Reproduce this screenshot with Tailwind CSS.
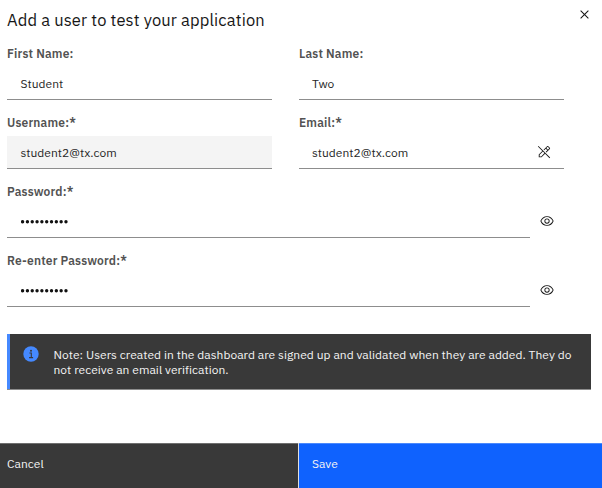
<!DOCTYPE html>
<html lang="en">
<head>
<meta charset="utf-8">
<title>Add a user</title>
<script src="https://cdn.jsdelivr.net/npm/@tailwindcss/browser@4"></script>
</head>
<body class="w-[602px] h-[488px] overflow-hidden bg-white text-[#262626] text-[12px] font-['IBM_Plex_Sans','Roboto',sans-serif]">
<main class="flex flex-col w-[602px] h-[488px]">
  <header class="flex h-[40px] pl-[7px] pr-[9.5px] justify-between items-start">
    <h1 class="text-[16.5px] leading-[20px] pt-[10px] tracking-[0.14px] text-[#161616] whitespace-nowrap">Add a user to test your application</h1>
    <button aria-label="Close" class="mt-[6px]"><svg class="block size-[17px]" viewBox="0 0 32 32" fill="#161616"><path d="M24 9.4 22.6 8 16 14.6 9.4 8 8 9.4 14.6 16 8 22.6 9.4 24 16 17.4 22.6 24 24 22.6 17.4 16z"/></svg></button>
  </header>

  <form class="flex flex-col pl-[7px]">
    <div class="grid grid-cols-[265px_265px] gap-x-[27px]">
      <div class="h-[69px] pt-[5px]">
        <label class="block h-[22px] leading-[18px] font-semibold tracking-[0.17px] text-[#525252]">First Name:</label>
        <div class="flex items-center h-[33px] pl-[13.5px] pt-px border-b border-[#8d8d8d] tracking-[0.02px]">Student</div>
      </div>
      <div class="h-[69px] pt-[5px]">
        <label class="block h-[22px] leading-[18px] font-semibold tracking-[0.17px] text-[#525252]">Last Name:</label>
        <div class="flex items-center h-[33px] pl-[13px] pt-px border-b border-[#8d8d8d] tracking-[0.02px]">Two</div>
      </div>
      <div class="h-[69px] pt-[5px]">
        <label class="block h-[22px] leading-[18px] font-semibold tracking-[0.17px] text-[#525252]">Username:*</label>
        <div class="flex items-center h-[33px] pl-[13.5px] pt-px border-b border-[#8d8d8d] bg-[#f4f4f4] tracking-[0.02px]">student2@tx.com</div>
      </div>
      <div class="h-[69px] pt-[5px]">
        <label class="block h-[22px] leading-[18px] font-semibold tracking-[0.17px] text-[#525252]">Email:*</label>
        <div class="flex items-center justify-between h-[33px] pl-[13px] pt-px pr-[13px] border-b border-[#8d8d8d] tracking-[0.02px]">
          <span>student2@tx.com</span>
          <svg class="size-[14px] mb-px" viewBox="0 0 32 32" fill="#161616"><path d="M30 28.6 3.4 2 2 3.4l10.1 10.1L4 21.6V28h6.4l8.1-8.1L28.6 30zM9.6 26H6v-3.6l7.5-7.5 3.6 3.6zM29.4 6.2l-3.6-3.6c-.8-.8-2-.8-2.8 0l-8 8 1.4 1.4L20 8.4l3.6 3.6-3.6 3.6 1.4 1.4 8-8c.8-.8.8-2 0-2.8zM25 10.6 21.4 7l3-3L28 7.6z"/></svg>
        </div>
      </div>
    </div>
    <div class="h-[69px] pt-[5px]">
      <label class="block h-[22px] leading-[18px] font-semibold tracking-[0.17px] text-[#525252]">Password:*</label>
      <div class="flex items-center gap-[10px]">
        <div class="flex items-center h-[33px] w-[523px] pl-[14px] border-b border-[#8d8d8d]">
          <svg class="w-[48px] h-[5px]" viewBox="0 0 48 5"><path d="M1.6 2.7h44" stroke="#111" stroke-width="3.4" stroke-linecap="round" stroke-dasharray="0 4.82"/></svg>
        </div>
        <svg class="size-[14px] mb-px" viewBox="0 0 32 32" fill="#161616"><path d="M30.94 15.66A16.69 16.69 0 0 0 16 5 16.69 16.69 0 0 0 1.06 15.66a1 1 0 0 0 0 .68A16.69 16.69 0 0 0 16 27a16.69 16.69 0 0 0 14.94-10.66 1 1 0 0 0 0-.68zM16 25c-5.3 0-10.9-3.93-12.93-9C5.1 10.93 10.7 7 16 7s10.9 3.93 12.93 9C26.9 21.07 21.3 25 16 25z"/><path d="M16 10a6 6 0 1 0 6 6 6 6 0 0 0-6-6zm0 10a4 4 0 1 1 4-4 4 4 0 0 1-4 4z"/></svg>
      </div>
    </div>
    <div class="h-[69px] pt-[5px]">
      <label class="block h-[22px] leading-[18px] font-semibold tracking-[0.17px] text-[#525252]">Re-enter Password:*</label>
      <div class="flex items-center gap-[10px]">
        <div class="flex items-center h-[33px] w-[523px] pl-[14px] border-b border-[#8d8d8d]">
          <svg class="w-[48px] h-[5px]" viewBox="0 0 48 5"><path d="M1.6 2.7h44" stroke="#111" stroke-width="3.4" stroke-linecap="round" stroke-dasharray="0 4.82"/></svg>
        </div>
        <svg class="size-[14px] mb-px" viewBox="0 0 32 32" fill="#161616"><path d="M30.94 15.66A16.69 16.69 0 0 0 16 5 16.69 16.69 0 0 0 1.06 15.66a1 1 0 0 0 0 .68A16.69 16.69 0 0 0 16 27a16.69 16.69 0 0 0 14.94-10.66 1 1 0 0 0 0-.68zM16 25c-5.3 0-10.9-3.93-12.93-9C5.1 10.93 10.7 7 16 7s10.9 3.93 12.93 9C26.9 21.07 21.3 25 16 25z"/><path d="M16 10a6 6 0 1 0 6 6 6 6 0 0 0-6-6zm0 10a4 4 0 1 1 4-4 4 4 0 0 1-4 4z"/></svg>
      </div>
    </div>
  </form>

  <section class="flex ml-[7px] mt-[18px] w-[584px] h-[56px] bg-[#393939] border-b border-b-[#8d8d8d] text-[#f4f4f4]">
    <div class="w-[2.5px] bg-[#4589ff] mr-[13.5px]"></div>
    <svg class="mt-[12px] size-[16px] shrink-0" viewBox="0 0 16 16"><circle cx="8" cy="8" r="7.7" fill="#4589ff"/><circle cx="8" cy="4.7" r="1" fill="#393939"/><path d="M6.4 7h1.9v4.6M6.1 11.6h4" fill="none" stroke="#393939" stroke-width="1.1"/></svg>
    <p class="ml-[14.5px] mt-[13px] leading-[15px] tracking-[0.03px] whitespace-nowrap">Note: Users created in the dashboard are signed up and validated when they are added. They do<br>not receive an email verification.</p>
  </section>

  <footer class="mt-auto flex h-[45px] gap-px bg-[#e0e0e0] text-[#f4f4f4]">
    <button class="w-[298px] bg-[#393939] border-t border-[#6f6f6f] text-left pl-[7px] pb-[4px] tracking-[0.04px]">Cancel</button>
    <button class="flex-1 bg-[#0f62fe] border-t border-[#4b89fc] text-left pl-[13px] pb-[4px] tracking-[0.04px]">Save</button>
  </footer>
</main>
</body>
</html>
